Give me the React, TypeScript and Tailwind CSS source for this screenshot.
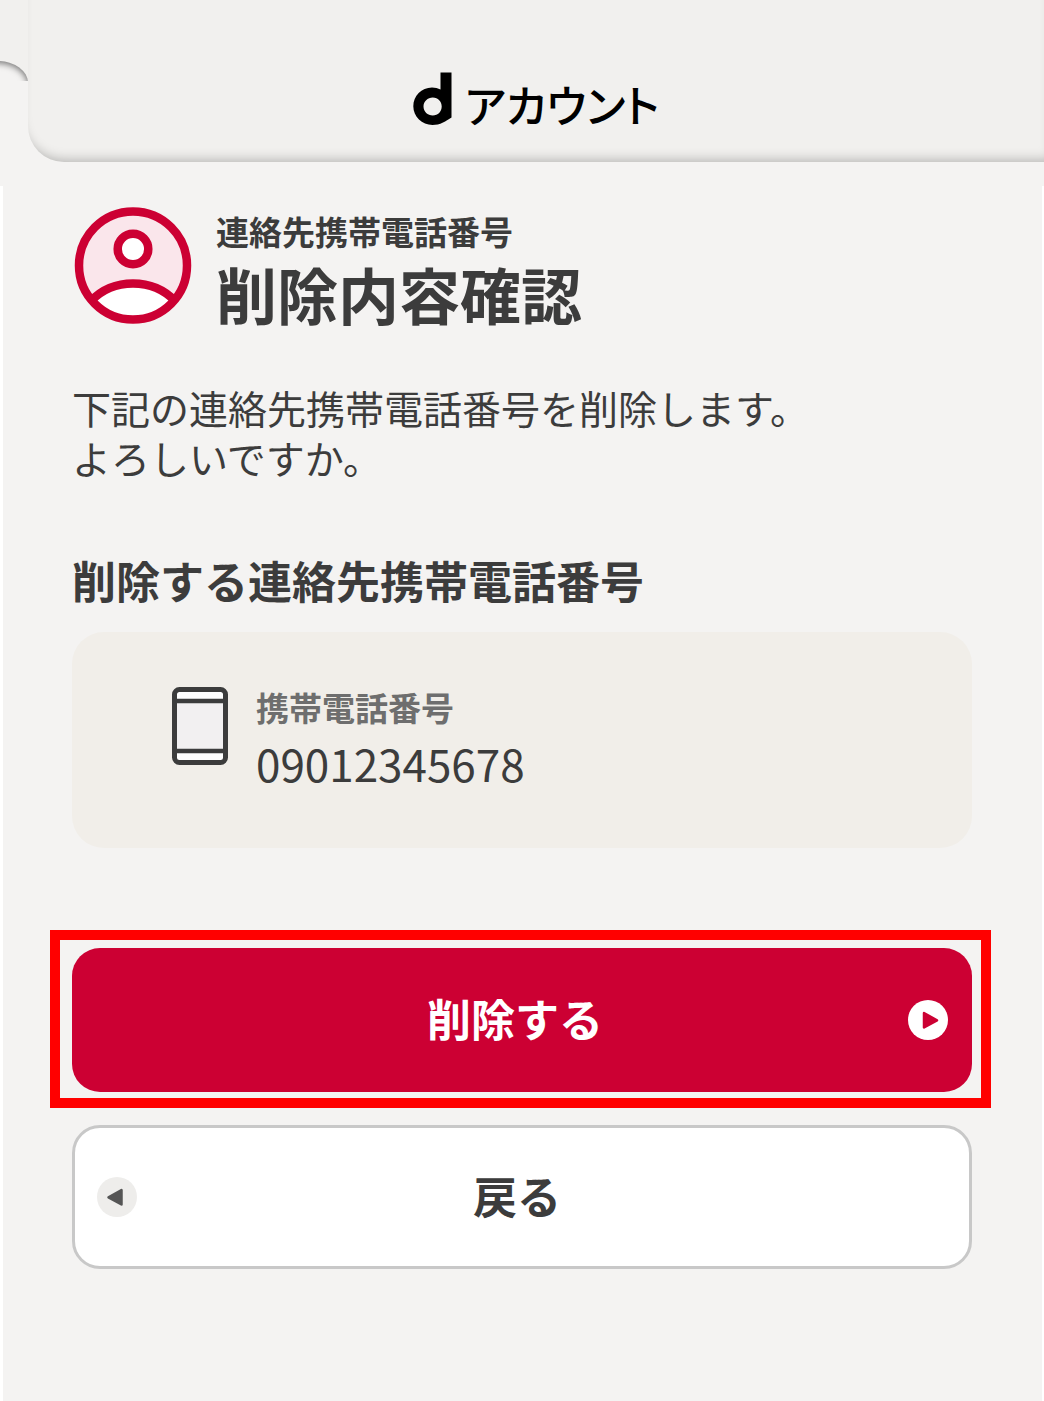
import type { ReactNode } from "react";

function LogoMark() {
  return (
    <svg viewBox="0 0 40 54" className="w-10 h-[54px]" role="img" aria-label="d">
      <path
        fillRule="evenodd"
        d="M27.500 0.500H38.500V45.500C35 47.500 33 49 30 50.600C26.500 52.400 23 53 19.500 53C9 53 0.300 44.800 0.300 34.300C0.300 23.800 8.500 15.500 19 15.500C22 15.500 25 16.200 27.500 17.500ZM19.800 25.500C14.600 25.500 10.500 29.500 10.500 34.500C10.500 39.500 14.600 43.500 19.800 43.500C25 43.500 28.700 39.500 28.700 34.500C28.700 29.500 25 25.500 19.800 25.500Z"
      />
    </svg>
  );
}

function AccountIcon() {
  return (
    <svg viewBox="0 0 118 118" className="w-[118px] h-[118px] shrink-0" fill="none" stroke="#cc0033" strokeWidth="8.500" aria-hidden="true">
      <circle cx="59" cy="59.500" r="54" fill="#fae6eb" stroke="none" />
      <path d="M19 93C29 83 43 78 59 78C75 78 89 83 99 93C89 105 75 113 59 113C43 113 29 105 19 93Z" fill="#fff" stroke="none" />
      <path d="M17 95C29 82.500 43 77.500 59 77.500C75 77.500 89 82.500 101 95" />
      <circle cx="59" cy="43" r="15.300" fill="#fff" />
      <circle cx="59" cy="59.500" r="54" />
    </svg>
  );
}

function PhoneIcon() {
  return (
    <svg viewBox="0 0 56 78" className="w-14 h-[78px] shrink-0" stroke="#3c3c3c" aria-hidden="true">
      <rect x="2.500" y="2.500" width="51" height="73" rx="5" fill="#fff" strokeWidth="5" />
      <rect x="5" y="14" width="46" height="50" fill="#f2f0f1" stroke="none" />
      <path d="M4 14H52M4 64H52" strokeWidth="4.500" />
    </svg>
  );
}

function ArrowIcon({ direction }: { direction: "left" | "right" }) {
  if (direction === "left") {
    return (
      <svg viewBox="0 0 40 40" className="w-10 h-10 shrink-0" aria-hidden="true">
        <circle cx="20" cy="20" r="20" fill="#eeedeb" />
        <path d="M11.500 20.300L24.500 13V27.500Z" fill="#555" stroke="#555" strokeWidth="2.500" strokeLinejoin="round" />
      </svg>
    );
  }

  return (
    <svg viewBox="0 0 40 40" className="w-10 h-10 shrink-0" aria-hidden="true">
      <circle cx="20" cy="20" r="20" fill="#fff" />
      <path d="M16 13L29 20.300L16 27.500Z" fill="#cc0033" stroke="#cc0033" strokeWidth="2.500" strokeLinejoin="round" />
    </svg>
  );
}

function Header() {
  return (
    <header className="flex h-[162px]">
      <div className="flex flex-col w-7">
        <div className="h-[61px] bg-[#f1f0ee]" />
        <div className="h-5 overflow-hidden bg-[#f1f0ee]">
          <div className="h-10 -ml-6 rounded-tr-[30px_22px] bg-[#f4f3f2] shadow-[inset_-1px_3px_6px_-1px_rgba(0,0,0,0.5)]" />
        </div>
      </div>
      <div className="flex flex-1 justify-center items-end gap-3 pb-9 rounded-bl-[36px] bg-[#f1f0ee] shadow-[inset_0_-10px_12px_-8px_rgba(0,0,0,0.25)]">
        <LogoMark />
        <span className="text-[44px] leading-[44px] font-medium text-black [font-feature-settings:'palt']">アカウント</span>
      </div>
    </header>
  );
}

function Highlight({ children }: { children: ReactNode }) {
  return (
    <div className="-ml-[22px] -mr-[19px] border-10 border-[#ff0000] pt-2 pb-[6px] pl-3 pr-[9px]">
      {children}
    </div>
  );
}

export default function App() {
  return (
    <div
      lang="ja"
      className="flex flex-col min-h-screen bg-[#f4f3f2] text-[#3c3c3c] font-['Noto_Sans_CJK_JP',sans-serif]"
    >
      <Header />
      <div className="h-6" />
      <main className="flex-1 border-l-3 border-r-2 border-white pl-[69px] pr-[70px] pt-5 pb-12">
        <div className="flex gap-6 pl-0.5">
          <AccountIcon />
          <div className="pt-[7px]">
            <p className="text-[33px] leading-9 font-bold">連絡先携帯電話番号</p>
            <h1 className="text-[61px] leading-[90px] font-bold">削除内容確認</h1>
          </div>
        </div>

        <p className="mt-[43px] text-[39px] leading-[50px]">
          下記の連絡先携帯電話番号を削除します。
          <br />
          よろしいですか。
        </p>

        <h2 className="mt-[66px] text-[44px] leading-[64px] font-bold">削除する連絡先携帯電話番号</h2>

        <section className="flex gap-7 mt-5 h-[216px] pl-[100px] rounded-[32px] bg-[#f1eee9]">
          <div className="pt-[55px]">
            <PhoneIcon />
          </div>
          <dl className="pt-[54px]">
            <dt className="text-[33px] leading-[42px] font-bold text-[#6e6e6e]">携帯電話番号</dt>
            <dd className="text-[44px] leading-[70px]">09012345678</dd>
          </dl>
        </section>

        <div className="mt-[82px]">
          <Highlight>
            <button
              type="button"
              className="flex items-center w-full h-36 pl-[50px] pr-6 rounded-[28px] bg-[#cc0033] text-white text-[44px] font-bold"
            >
              <span className="flex-1 pb-1">削除する</span>
              <ArrowIcon direction="right" />
            </button>
          </Highlight>
          <button
            type="button"
            className="flex items-center w-full h-36 mt-[17px] pl-[22px] pr-[72px] rounded-[28px] border-3 border-[#c8c8c8] bg-white text-[44px] font-bold"
          >
            <ArrowIcon direction="left" />
            <span className="flex-1 pb-1">戻る</span>
          </button>
        </div>
      </main>
    </div>
  );
}
